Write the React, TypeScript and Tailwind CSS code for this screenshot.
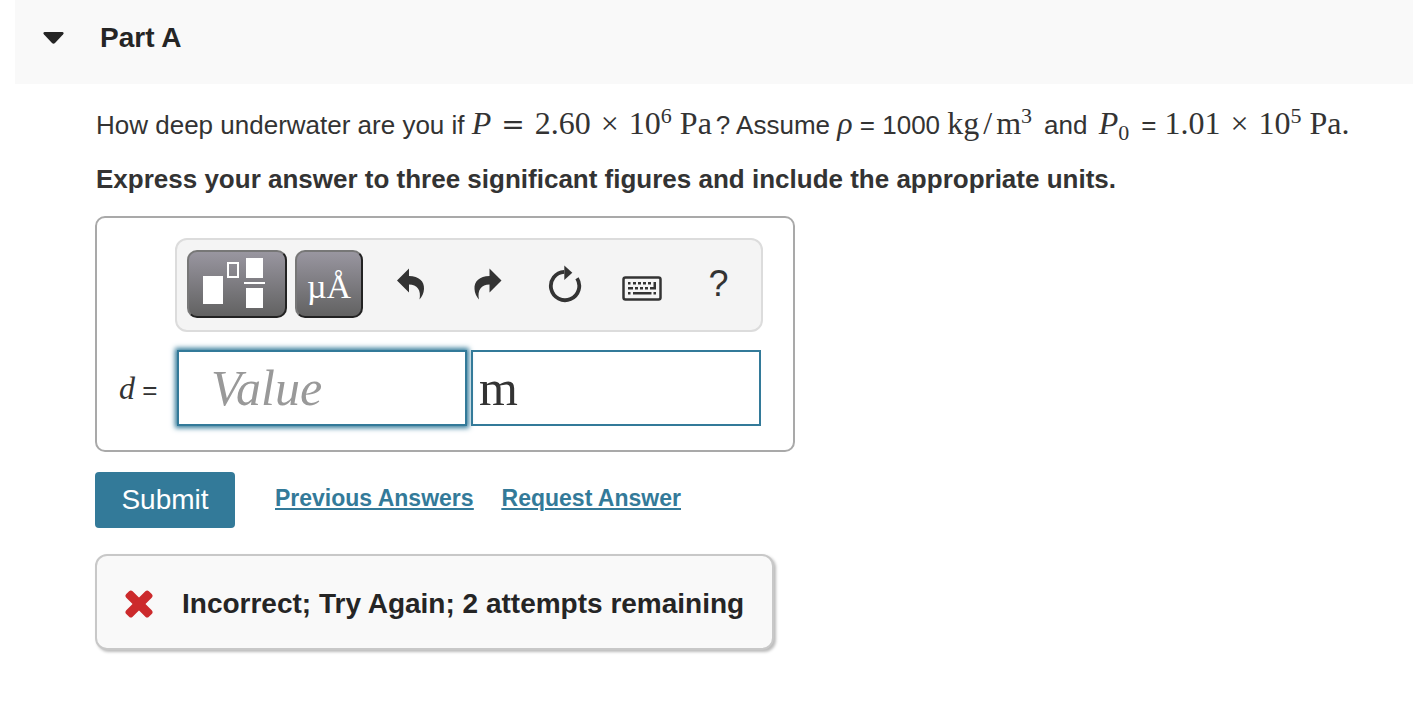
import React, { useState } from 'react';

const MATH = "font-['Liberation_Serif',serif] text-[32px]";

function TemplatesIcon() {
  return (
    <svg width="68" height="52" viewBox="0 0 68 52" aria-hidden="true">
      <rect x="0" y="18" width="20" height="28" fill="#fff" />
      <rect x="25" y="5" width="10" height="14" fill="none" stroke="#fff" strokeWidth="2" />
      <rect x="43" y="0" width="17" height="20" fill="#fff" />
      <rect x="41" y="24" width="21" height="2" fill="#fff" />
      <rect x="43" y="30" width="17" height="20" fill="#fff" />
    </svg>
  );
}

function UndoIcon() {
  return (
    <svg width="28" height="32" viewBox="0 0 28 32" fill="#333" aria-hidden="true">
      <path d="M0 12.500L12 0.500V8C22 8 27.500 13.500 27 21C26.800 25 25 29 22.500 31.500C24.500 22 20 16.500 12 16.500V24.500Z" />
    </svg>
  );
}

function RedoIcon() {
  return (
    <svg width="28" height="32" viewBox="0 0 28 32" fill="#333" aria-hidden="true">
      <path d="M27.500 12.500L15.500 0.500V8C5.500 8 0 13.500 0.500 21C0.700 25 2.500 29 5 31.500C3 22 7.500 16.500 15.500 16.500V24.500Z" />
    </svg>
  );
}

function ResetIcon() {
  return (
    <svg width="34" height="38" viewBox="0 0 34 38" aria-hidden="true">
      <path d="M29 13.300A14.200 14.200 0 1 1 16.300 6.800" fill="none" stroke="#333" strokeWidth="3.800" />
      <path d="M16.300 0.500L24.300 7.700L16.300 15Z" fill="#333" />
    </svg>
  );
}

function KeyboardIcon() {
  return (
    <svg width="40" height="25" viewBox="0 0 40 25" aria-hidden="true">
      <rect x="1.500" y="1.500" width="37" height="22" rx="2" fill="none" stroke="#333" strokeWidth="2.500" />
      <g fill="#333">
        <path d="M6 6h2.500v2.500H6zM11 6h3v2.500h-3zM16 6h3v2.500h-3zM21 6h3v2.500h-3zM26 6h3v2.500h-3z" />
        <path d="M6 11h5v2.500H6zM13 11h3v2.500h-3zM18 11h3v2.500h-3zM23 11h3v2.500h-3z" />
        <path d="M31.500 6h2.500v7.500h-6V11h3.500z" />
        <path d="M6 16h2.500v2.500H6zM11 16h18.500v2.500H11zM31.500 16H34v2.500h-2.500z" />
      </g>
    </svg>
  );
}

const tools = [
  { label: 'Undo', icon: <UndoIcon /> },
  { label: 'Redo', icon: <RedoIcon /> },
  { label: 'Reset', icon: <ResetIcon /> },
  { label: 'Keyboard shortcuts', icon: <span className="block pt-2"><KeyboardIcon /></span> },
  { label: 'Help', icon: <span className="text-[36px] leading-none">?</span> },
];

function Power({ value, exp }: { value: string; exp: string }) {
  return (
    <>
      {value}
      <span className="mx-[10px] leading-none">×</span>
      10<sup className="text-[22px]">{exp}</sup>
      <span className="ml-2">Pa</span>
    </>
  );
}

export default function App() {
  const [open, setOpen] = useState(true);
  const [value, setValue] = useState('');
  const [units, setUnits] = useState('m');

  return (
    <main className="min-h-screen bg-white font-['Liberation_Sans',Arial,sans-serif] text-[26px] text-[#333]">
      {/* Part header */}
      <header className="ml-[15px] flex h-[84px] items-start bg-[#f9f9f9] pt-4 pl-7 text-[#252525]">
        <button
          type="button"
          aria-label="Toggle Part A"
          aria-expanded={open}
          onClick={() => setOpen(!open)}
          className="mr-9 flex h-11 items-center"
        >
          <svg width="21" height="12" viewBox="0 0 21 12" fill="#252525" aria-hidden="true">
            <path d="M1.500 0H19.500Q21.500 .8 20 2.500L12 11Q10.500 12.500 9 11L1 2.500Q-.5 .8 1.500 0Z" />
          </svg>
        </button>
        <h2 className="text-[28px] leading-[44px] font-bold">Part A</h2>
      </header>

      {open && (
        <div className="px-4 pt-[19px] sm:pr-10 sm:pl-[95px]">
          <p className="pl-px leading-10">
            How deep underwater are you if{' '}
            <span className={`${MATH} mr-1`}>
              <i>P</i>
              <span className="mx-[10px] font-['DejaVu_Serif',serif] text-[28px] leading-none">=</span>
              <Power value="2.60" exp="6" />
            </span>
            ? Assume <i className={MATH}>ρ</i> = 1000{' '}
            <span className={MATH}>
              kg<span className="mx-1">/</span>m<sup className="text-[22px]">3</sup>
            </span>
            <span className="mr-1 ml-3">and</span>{' '}
            <span className={MATH}>
              <i>P</i>
              <sub className="text-[22px]">0</sub>
            </span>
            <span className="mr-2 ml-3">=</span>
            <span className={MATH}>
              <Power value="1.01" exp="5" />.
            </span>
          </p>
          <p className="mt-[14px] pl-px leading-10 font-bold">
            Express your answer to three significant figures and include the appropriate units.
          </p>

          {/* Answer box */}
          <section className="mt-[17px] w-full max-w-[700px] rounded-[10px] border-2 border-[#a9a9a9] pt-5 pr-[30px] pb-6 pl-[22px]">
            <div className="ml-14 flex items-center rounded-xl border-2 border-[#dcdcdc] bg-[#f4f4f4] pt-[10px] pr-1 pb-3 pl-[10px]">
              <button
                type="button"
                aria-label="Templates"
                className="flex h-[68px] w-[100px] shrink-0 items-center justify-center rounded-[10px] border-2 border-t-[#777] border-r-[#222] border-b-[#222] border-l-[#777] bg-linear-to-b from-[#9996a0] to-[#626262]"
              >
                <TemplatesIcon />
              </button>
              <button
                type="button"
                aria-label="Symbols"
                className="mr-[10px] ml-2 h-[68px] w-[68px] shrink-0 rounded-[10px] border-2 border-t-[#777] border-r-[#222] border-b-[#222] border-l-[#777] bg-linear-to-b from-[#9996a0] to-[#626262] pt-1 font-['Liberation_Serif',serif] text-[34px] text-white"
              >
                µÅ
              </button>
              {tools.map(({ label, icon }) => (
                <button key={label} type="button" aria-label={label} className="flex h-[68px] flex-1 items-center justify-center">
                  {icon}
                </button>
              ))}
            </div>

            <div className="mt-[18px] flex items-center gap-1">
              <label htmlFor="value" className="w-[54px] shrink-0 whitespace-nowrap">
                <i className={MATH}>d</i> =
              </label>
              <div className="mr-[2px] grid flex-1 grid-cols-2 gap-1">
                <input
                  id="value"
                  value={value}
                  onChange={(e) => setValue(e.target.value)}
                  placeholder="Value"
                  className="h-[76px] w-full min-w-0 border-2 border-[#337a99] pl-8 font-['Liberation_Serif',serif] text-[50px] shadow-[0_0_5px_2px_#337a99] outline-none placeholder:text-[#999] placeholder:italic"
                />
                <input
                  aria-label="Units"
                  value={units}
                  onChange={(e) => setUnits(e.target.value)}
                  className="h-[76px] w-full min-w-0 border-2 border-[#337a99] pl-[6px] font-['Liberation_Serif',serif] text-[50px] outline-none"
                />
              </div>
            </div>
          </section>

          <div className="mt-5 flex items-center">
            <button type="button" className="h-14 w-[140px] rounded-[4px] bg-[#337a99] text-[28px] text-white">
              Submit
            </button>
            <nav className="mb-1 ml-10 flex gap-7 text-[23px] leading-8 font-bold text-[#337a99] underline decoration-2 underline-offset-2">
              <a href="#previous">Previous Answers</a>
              <a href="#request">Request Answer</a>
            </nav>
          </div>

          {/* Feedback */}
          <div
            role="status"
            className="mt-[26px] flex w-fit items-center rounded-xl border-2 border-[#c8c8c8] bg-[#f9f9f9] px-7 pt-[26px] pb-[22px] text-[28px] leading-[44px] font-bold text-[#252525] shadow-[2px_2px_3px_#bbb]"
          >
            <svg className="mr-[29px] shrink-0" width="28" height="28" viewBox="0 0 28 28" fill="#cc2a2c" aria-hidden="true">
              <rect x="-2" y="9.500" width="32" height="9" rx="2.500" transform="rotate(45 14 14)" />
              <rect x="-2" y="9.500" width="32" height="9" rx="2.500" transform="rotate(-45 14 14)" />
            </svg>
            Incorrect; Try Again; 2 attempts remaining
          </div>
        </div>
      )}
    </main>
  );
}
